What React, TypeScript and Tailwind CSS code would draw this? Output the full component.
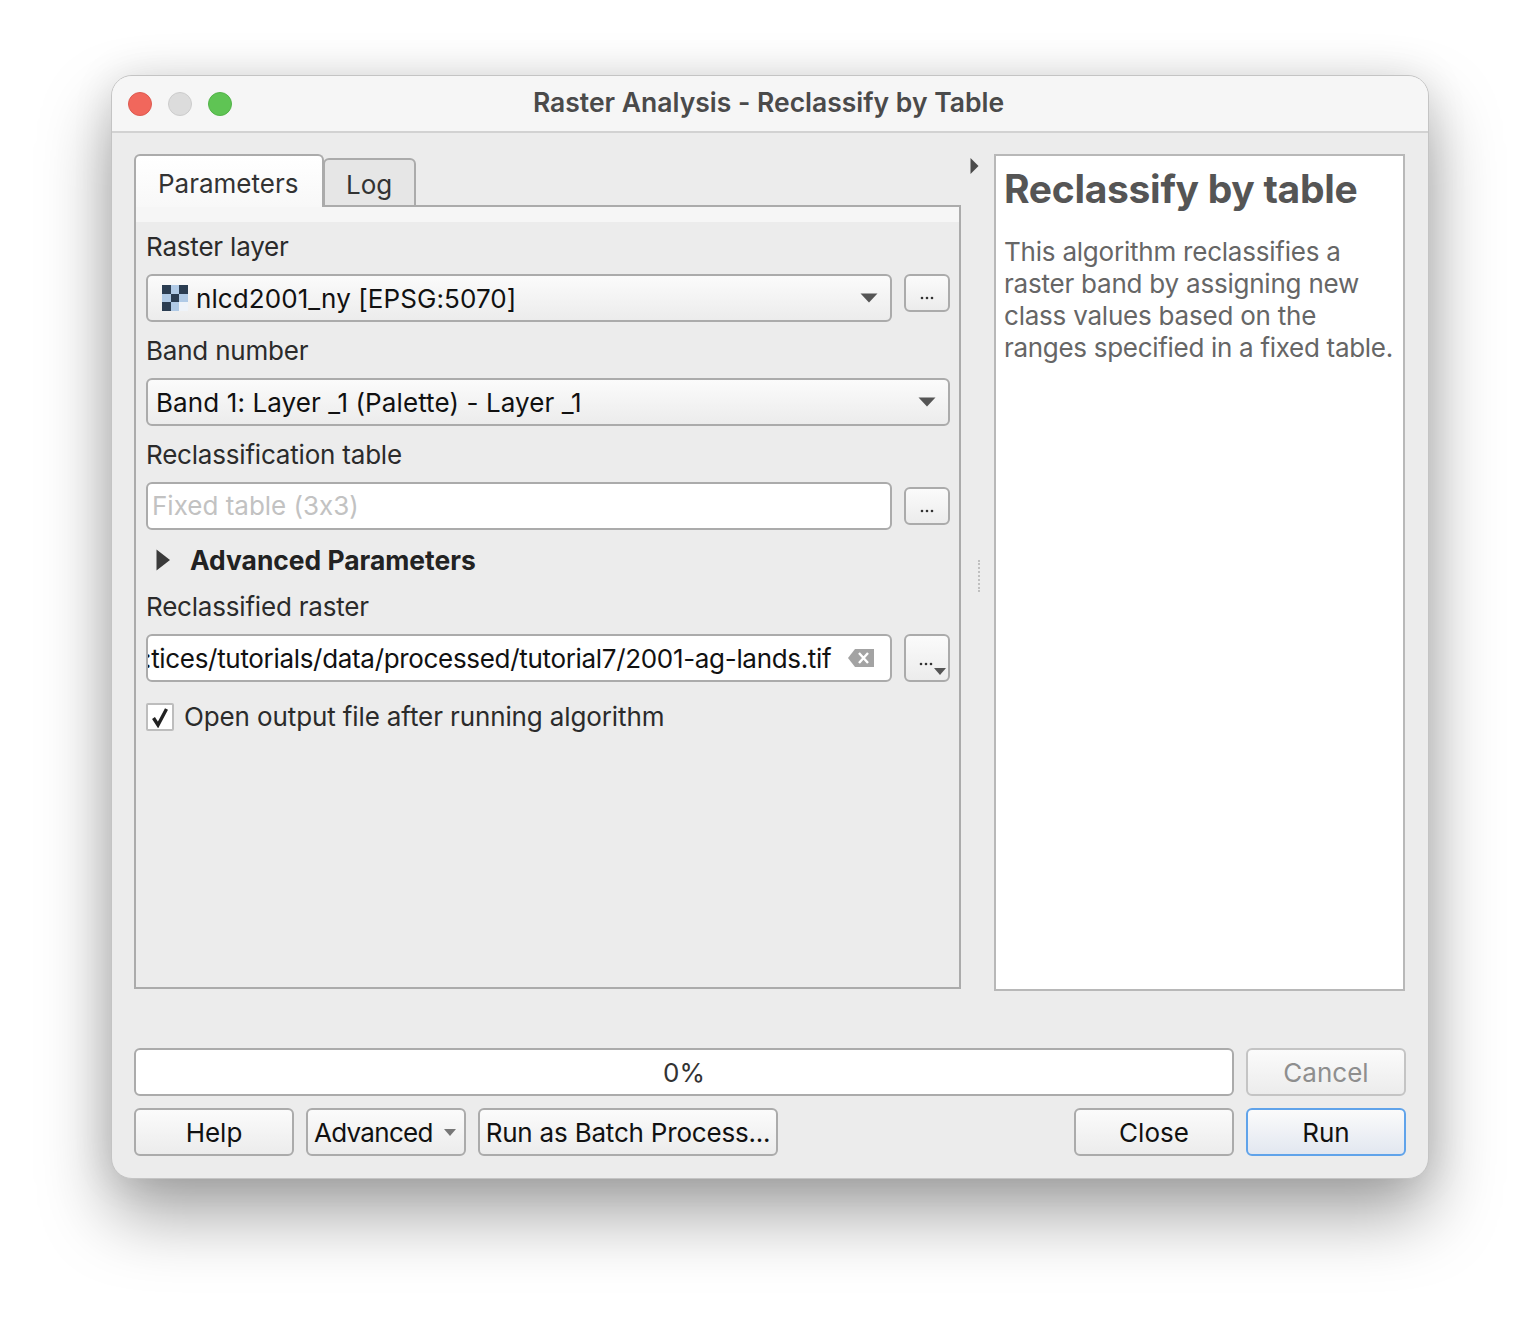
const Caret = ({ className = "" }: { className?: string }) => (
  <svg className={className} width="18" height="10" viewBox="0 0 18 10"><path d="M0.5 0.5H17.5L9 9.5Z" fill="#555555" /></svg>
);

const btn = "rounded-[6px] border-2 border-[#ababab] bg-gradient-to-b from-[#fbfbfb] to-[#ececec] flex items-center justify-center text-[#111111]";

function Dots({ className = "" }: { className?: string }) {
  return (
    <svg className={className} width="14" height="4" viewBox="0 0 14 4">
      <circle cx="2" cy="2" r="1.3" fill="#333" />
      <circle cx="7" cy="2" r="1.3" fill="#333" />
      <circle cx="12" cy="2" r="1.3" fill="#333" />
    </svg>
  );
}

function RasterIcon() {
  const c = ["#2b3d52", "#b0cae6", "#2b3d52", "#b0cae6", "#2b3d52", "#b0cae6", "#2b3d52", "#b0cae6", "#eef3f9"];
  return (
    <div className="grid grid-cols-3 w-[26px] h-[26px]">
      {c.map((x, i) => (
        <div key={i} style={{ background: x }} />
      ))}
    </div>
  );
}

export default function App() {
  return (
    <div className="w-[1540px] h-[1326px] bg-white pt-[75px] pl-[111px] overflow-hidden font-['Inter','Liberation_Sans',sans-serif] text-[26px] leading-none text-[#222222] [font-feature-settings:'calt'_0]">
      <div className="w-[1318px] h-[1104px] rounded-[21px] border border-[#c4c4c4] bg-[#ececec] shadow-[0_36px_70px_rgba(0,0,0,0.36),0_0_40px_rgba(0,0,0,0.10)] overflow-hidden flex flex-col">
        <div className="h-[57px] shrink-0 border-b-2 border-[#d2d2d2] bg-[#f6f6f6] flex items-center pl-[16px] relative">
          <div className="flex gap-[16px] pt-[1px]">
            <div className="w-[24px] h-[24px] rounded-full bg-[#f1675c] border border-[#dd5a50]" />
            <div className="w-[24px] h-[24px] rounded-full bg-[#dcdcdc] border border-[#cccccc]" />
            <div className="w-[24px] h-[24px] rounded-full bg-[#5fc454] border border-[#52b348]" />
          </div>
          <div className="absolute left-0 right-0 top-[13px] text-center font-semibold text-[#4a4a4a] text-[26.5px]">
            <span className="pr-[3px]">Raster Analysis - Reclassify by Table</span>
          </div>
        </div>

        <div className="flex-1 px-[22px] pt-[21px] flex flex-col">
          <div className="flex h-[838px] items-start">
            <div className="w-[827px] shrink-0 flex flex-col">
              <div className="flex items-end h-[53px] shrink-0 relative z-10">
                <div className="w-[190px] h-[53px] rounded-t-[6px] border-2 border-b-0 border-[#ababab] bg-gradient-to-b from-white to-[#f8f8f8] pl-[22px] pt-[15px] text-[#333333]">
                  Parameters
                </div>
                <div className="w-[93px] h-[49px] -ml-[1px] rounded-t-[6px] border-2 border-[#ababab] bg-[#e6e6e6] pl-[21px] pt-[12px] text-[#333333]">
                  Log
                </div>
              </div>
              <div className="h-[784px] -mt-[2px] border-2 border-[#ababab] bg-[#ececec] flex flex-col">
                <div className="h-[15px] shrink-0 bg-[#f6f6f6]" />
                <div className="pl-[10px] pr-[9px] flex flex-col text-[#2b2b2b]">
                  <div className="h-[52px] flex items-start pt-[12px] tracking-[-0.2px]">Raster layer</div>
                  <div className="flex gap-[12px] items-start">
                    <div className="w-[746px] h-[48px] rounded-[6px] border-2 border-[#ababab] bg-gradient-to-b from-[#fbfbfb] to-[#ececec] flex items-center pl-[14px] pr-[12px] text-[#111111]">
                      <RasterIcon />
                      <span className="ml-[8px] flex-1 pt-[1px] tracking-[0.08px]">nlcd2001_ny [EPSG:5070]</span>
                      <Caret />
                    </div>
                    <div className={`${btn} w-[46px] h-[38px]`}><Dots className="mt-[10px]" /></div>
                  </div>
                  <div className="h-[56px] flex items-start pt-[16px] tracking-[-0.2px]">Band number</div>
                  <div className="w-[804px] h-[48px] rounded-[6px] border-2 border-[#ababab] bg-gradient-to-b from-[#fbfbfb] to-[#ececec] flex items-center pl-[8px] pr-[12px] text-[#111111]">
                    <span className="flex-1 pt-[1px] tracking-[0.1px]">Band 1: Layer _1 (Palette) - Layer _1</span>
                    <Caret />
                  </div>
                  <div className="h-[56px] flex items-start pt-[16px] tracking-[-0.2px]">Reclassification table</div>
                  <div className="flex gap-[12px] items-center">
                    <div className="w-[746px] h-[48px] rounded-[6px] border-2 border-[#ababab] bg-white flex items-center pl-[4px] text-[#c2c2c2]">
                      Fixed table (3x3)
                    </div>
                    <div className={`${btn} w-[46px] h-[38px]`}><Dots className="mt-[10px]" /></div>
                  </div>
                  <div className="h-[64px] pb-[4px] flex items-center font-bold text-[26.4px] text-[#222222] pl-[10px]">
                    <svg width="14" height="24" viewBox="0 0 14 24" className="mr-[20px]"><path d="M0.5 1.5L14 12L0.5 22.5Z" fill="#3a3a3a" /></svg>
                    Advanced Parameters
                  </div>
                  <div className="h-[40px] flex items-start tracking-[-0.2px]">Reclassified raster</div>
                  <div className="flex gap-[12px]">
                    <div className="w-[746px] h-[48px] rounded-[6px] border-2 border-[#ababab] bg-white flex items-center pl-[2px] pt-[1px] text-[#111111] relative overflow-hidden">
                      <span className="whitespace-nowrap -ml-[6px] tracking-[-0.32px]">:tices/tutorials/data/processed/tutorial7/2001-ag-lands.tif</span>
                      <svg className="absolute right-[16px] top-[12px]" width="26" height="20" viewBox="0 0 26 20">
                        <path d="M0 10L7 1H26V19H7Z" fill="#a3a3a3" />
                        <path d="M11 5L20 15M20 5L11 15" stroke="#fff" strokeWidth="2.4" />
                      </svg>
                    </div>
                    <div className={`${btn} w-[46px] h-[48px] relative`}>
                      <Dots className="mt-[12px] -ml-[2px]" />
                      <svg className="absolute right-[2px] bottom-[5px]" width="12" height="7" viewBox="0 0 12 7"><path d="M0 0H12L6 7Z" fill="#555" /></svg>
                    </div>
                  </div>
                  <div className="flex items-center mt-[21px] h-[28px]">
                    <div className="w-[28px] h-[28px] border-2 border-[#bdbdbd] rounded-[2px] bg-white flex items-center justify-center">
                      <svg width="20" height="22" viewBox="0 0 20 22"><path d="M3.5 12L8 19L16.5 3" fill="none" stroke="#222" strokeWidth="3.4" /></svg>
                    </div>
                    <span className="ml-[10px] tracking-[-0.12px]">Open output file after running algorithm</span>
                  </div>
                </div>
              </div>
            </div>

            <div className="w-[33px] shrink-0 h-[838px] relative">
              <svg className="absolute left-[9px] top-[4px]" width="9" height="16" viewBox="0 0 9 16"><path d="M0.5 0L8.5 8L0.5 16Z" fill="#4a4a4a" /></svg>
              <div className="absolute left-[17px] top-[406px] h-[32px] border-l-2 border-dotted border-[#c0c0c0]" />
            </div>

            <div className="w-[411px] h-[837px] border-2 border-[#b8b8b8] bg-white pl-[8px] pt-[12px]">
              <div className="text-[39px] font-bold text-[#555555] leading-[42px] tracking-[-0.3px]">Reclassify by table</div>
              <div className="mt-[26px] leading-[32px] text-[#666666] whitespace-nowrap tracking-[-0.22px]">
                <div>This algorithm reclassifies a</div>
                <div>raster band by assigning new</div>
                <div>class values based on the</div>
                <div className="tracking-[-0.3px]">ranges specified in a fixed table.</div>
              </div>
            </div>
          </div>

          <div className="flex gap-[12px] mt-[56px]">
            <div className="w-[1100px] h-[48px] pt-[2px] rounded-[6px] border-2 border-[#ababab] bg-white flex items-center justify-center text-[#333333]">
              0%
            </div>
            <div className="w-[160px] h-[48px] pt-[2px] rounded-[6px] border-2 border-[#c4c4c4] bg-gradient-to-b from-[#fbfbfb] to-[#ececec] flex items-center justify-center text-[#8e8e8e]">Cancel</div>
          </div>
          <div className="flex mt-[12px]">
            <div className={`${btn} w-[160px] h-[48px] pt-[2px]`}>Help</div>
            <div className={`${btn} w-[160px] h-[48px] pt-[2px] ml-[12px] !justify-start pl-[6px]`}>
              <span className="flex-1 tracking-[-0.7px]">Advanced</span>
              <svg className="mr-[8px] -mt-[2px]" width="12" height="7" viewBox="0 0 12 7"><path d="M0 0H12L6 7Z" fill="#777" /></svg>
            </div>
            <div className={`${btn} w-[300px] h-[48px] pt-[2px] ml-[12px] tracking-[-0.2px]`}>Run as Batch Process...</div>
            <div className="flex-1" />
            <div className={`${btn} w-[160px] h-[48px] pt-[2px]`}>Close</div>
            <div className="w-[160px] h-[48px] pt-[2px] ml-[12px] rounded-[6px] border-2 border-[#60a3ea] bg-gradient-to-b from-[#fbfbfb] to-[#e2e7f0] flex items-center justify-center text-[#111111]">Run</div>
          </div>
        </div>
      </div>
    </div>
  );
}
